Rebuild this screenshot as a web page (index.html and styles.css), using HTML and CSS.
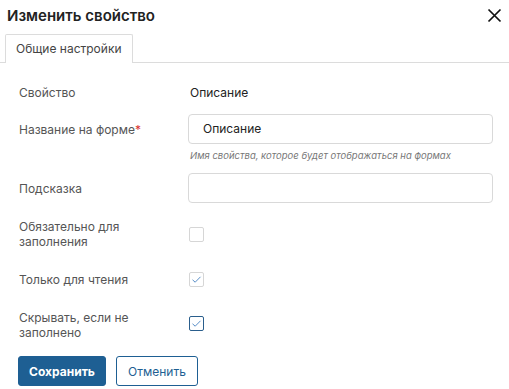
FILE: index.html
```html
<!DOCTYPE html>
<html lang="ru">
<head>
<meta charset="utf-8">
<link rel="stylesheet" href="styles.css">
</head>
<body>
<div class="dialog">
  <div class="header">
    <div class="title">Изменить свойство</div>
    <button class="close" aria-label="close">
      <svg width="15" height="15" viewBox="0 0 15 15"><path d="M1.5 1.5 L13.5 13.5 M13.5 1.5 L1.5 13.5" stroke="#111" stroke-width="1.7" fill="none"/></svg>
    </button>
  </div>
  <div class="tabs">
    <div class="tab">Общие настройки</div>
  </div>
  <div class="form">
    <div class="row r1">
      <div class="label">Свойство</div>
      <div class="value">Описание</div>
    </div>
    <div class="row r2">
      <div class="label">Название на форме<span class="req">*</span></div>
      <div class="input">Описание</div>
    </div>
    <div class="hint-row">
      <div></div>
      <div class="hint">Имя свойства, которое будет отображаться на формах</div>
    </div>
    <div class="row r3">
      <div class="label">Подсказка</div>
      <div class="input"></div>
    </div>
    <div class="row r4 tall">
      <div class="label">Обязательно для<br>заполнения</div>
      <div><span class="cb"></span></div>
    </div>
    <div class="row r5 tall">
      <div class="label">Только для чтения</div>
      <div><span class="cb"><svg width="13" height="13" viewBox="0 0 13 13"><path d="M2.5 6.8 L5.2 9.2 L10.5 3.8" stroke="#5a8fc8" stroke-width="1" fill="none"/></svg></span></div>
    </div>
    <div class="row r6 tall">
      <div class="label">Скрывать, если не<br>заполнено</div>
      <div><span class="cb focus"><svg width="13" height="13" viewBox="0 0 13 13"><path d="M2.5 6.8 L5.2 9.2 L10.5 3.8" stroke="#5a8fc8" stroke-width="1" fill="none"/></svg></span></div>
    </div>
    <div class="buttons">
      <button class="btn primary">Сохранить</button>
      <button class="btn secondary">Отменить</button>
    </div>
  </div>
</div>
</body>
</html>
```
FILE: styles.css
```css
html, body {
  margin: 0;
  padding: 0;
  background: #fff;
}
body {
  font-family: Inter, "Noto Sans", sans-serif;
  color: #222;
}
.dialog {
  width: 509px;
  height: 389px;
  overflow: hidden;
}
.header {
  display: flex;
  justify-content: space-between;
  align-items: center;
  padding: 4px 7px 0 7px;
  height: 22px;
}
.title {
  font-size: 15px;
  font-weight: 600;
  color: #222;
}
.close {
  border: 0;
  background: none;
  padding: 0;
  width: 15px;
  height: 15px;
  margin-right: 0;
  margin-top: 1px;
  display: flex;
}
.tabs {
  margin-top: 8px;
  border-bottom: 1px solid #dcdcdc;
  padding-left: 5px;
  display: flex;
}
.tab {
  border: 1px solid #dcdcdc;
  border-bottom: 0;
  border-radius: 2px 2px 0 0;
  height: 28px;
  line-height: 28px;
  padding: 0 10px;
  width: 106px;
  font-size: 12px;
  color: #444;
  background: #fff;
  margin-bottom: -1px;
  position: relative;
}
.form {
  padding: 19px 0 0 19px;
}
.row {
  display: grid;
  grid-template-columns: 169px 305px;
  align-items: center;
}
.label {
  font-size: 12px;
  line-height: 15px;
  color: #555;
}
.req {
  color: #d9322f;
}
.value {
  font-size: 12px;
  color: #222;
  padding-left: 2px;
}
.r1 { height: 20px; }
.r2 { margin-top: 12px; }
.r3 { margin-top: 11px; }
.input {
  box-sizing: border-box;
  height: 30px;
  border: 1px solid #d9d9d9;
  border-radius: 4px;
  font-size: 12px;
  line-height: 28px;
  padding-left: 14px;
  color: #222;
}
.hint-row {
  display: grid;
  grid-template-columns: 169px 305px;
  margin-top: 5px;
  height: 13px;
}
.hint {
  font-size: 9.5px;
  font-style: italic;
  color: #777;
  line-height: 13px;
  padding-left: 2px;
}
.tall { height: 30px; }
.r4 { margin-top: 16px; }
.r5 { margin-top: 15px; }
.r6 { margin-top: 16px; }
.cb {
  box-sizing: border-box;
  display: flex;
  align-items: center;
  justify-content: center;
  width: 15px;
  height: 15px;
  border: 1px solid #d6d6d6;
  border-radius: 2px;
  margin-left: 1px;
  background: #fff;
}
.r6 .cb { margin-top: -3px; }
.cb.focus {
  border: 1.5px solid #2a5e8c;
}
.buttons {
  display: flex;
  gap: 10px;
  margin-top: 16px;
  margin-left: -1px;
}
.btn {
  box-sizing: border-box;
  height: 30px;
  border-radius: 3px;
  font-family: Inter, "Noto Sans", sans-serif;
  font-size: 12px;
  padding: 0;
  cursor: pointer;
}
.primary {
  width: 88px;
  background: #1e5f93;
  border: 1px solid #1e5f93;
  color: #fff;
  font-weight: 700;
}
.secondary {
  width: 82px;
  background: #fff;
  border: 1px solid #1e5f93;
  color: #1e5f93;
  font-weight: 400;
}
```
